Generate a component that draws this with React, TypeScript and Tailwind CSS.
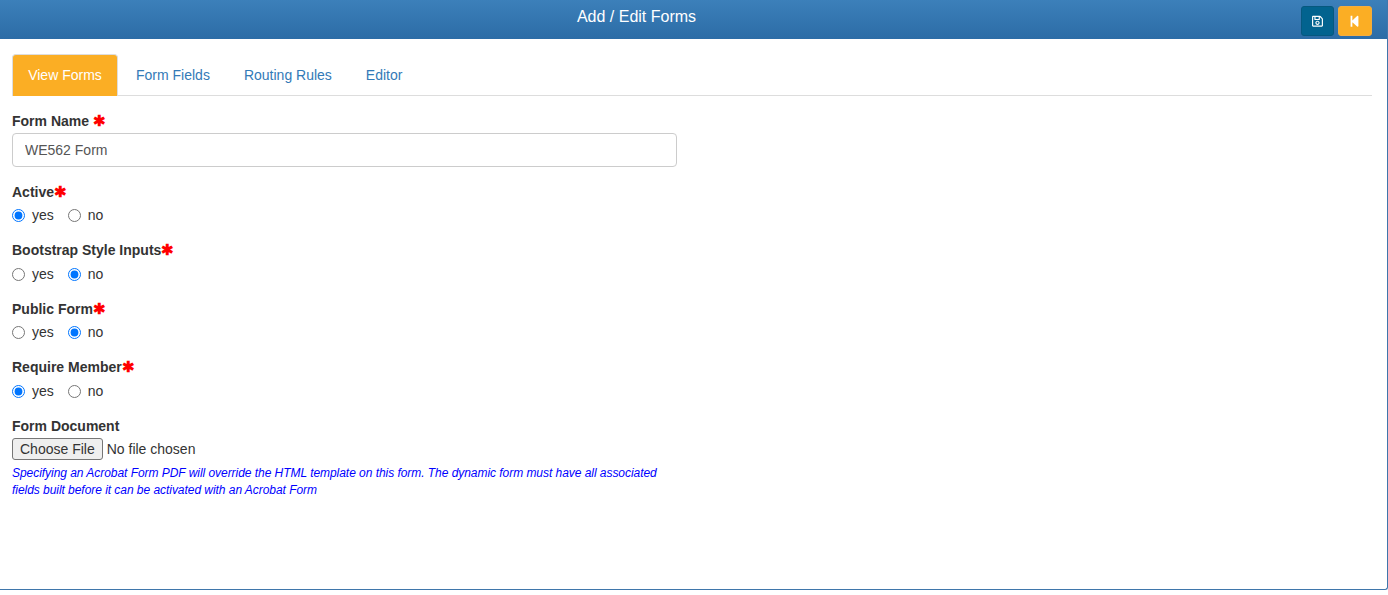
import React from 'react';
import { FaRegSave, FaStepBackward } from 'react-icons/fa';

const required = <span className="text-[#ff0000] text-[15px] leading-none">✱</span>;

function RadioGroup({ name, label, value }: { name: string; label: string; value: 'yes' | 'no' }) {
  return (
    <div className="mb-[14.75px]">
      <div className="h-5 mb-[3.75px] font-bold text-[14px] leading-5 text-[#333]">
        {label}
        {required}
      </div>
      <div className="flex items-center h-5 text-[14px] text-[#333]">
        <label className="flex items-center mr-[14px]">
          <input type="radio" name={name} defaultChecked={value === 'yes'} className="m-0 mr-[7px] w-[13px] h-[13px]" />
          yes
        </label>
        <label className="flex items-center">
          <input type="radio" name={name} defaultChecked={value === 'no'} className="m-0 mr-[7px] w-[13px] h-[13px]" />
          no
        </label>
      </div>
    </div>
  );
}

export default function App() {
  return (
    <div className="w-[1388px] h-[595px] bg-white font-['Liberation_Sans',Arial,sans-serif]">
      <div className="h-[590px] border-r border-b border-[#3f76ab] rounded-br-[3px]">
        <div className="h-[39px] flex bg-gradient-to-b from-[#3c80ba] to-[#2c6ca6]">
          <div className="flex-1 pr-[28px] pt-[6px] text-center text-white text-[16px] leading-[22px]">
            Add / Edit Forms
          </div>
          <div className="flex gap-[4px] pt-[6px] pr-[15px]">
            <button className="w-[33px] h-[30px] flex items-center justify-center rounded-[3px] bg-[#02638f] border border-[#06587f] text-white">
              <FaRegSave className="w-[11px] h-[12.5px]" />
            </button>
            <button className="w-[34px] h-[30px] flex items-center justify-center rounded-[3px] bg-[#fbae24] border border-[#f5ad3f] text-white">
              <FaStepBackward className="w-[11px] h-[12.5px] -translate-x-px" />
            </button>
          </div>
        </div>

        <div className="pl-3 pr-[15px] pt-[15px]">
          <div className="flex h-[42px] border-b border-[#dddddd] text-[14px] text-[#337ab7]">
            <div className="w-[106px] h-[42px] flex items-center justify-center bg-[#fbae24] text-white border border-b-0 border-[#dddddd] rounded-t-[4px]">
              View Forms
            </div>
            <div className="ml-[2px] px-[16px] h-[42px] flex items-center">Form Fields</div>
            <div className="ml-[2px] px-[16px] h-[42px] flex items-center">Routing Rules</div>
            <div className="ml-[2px] px-[16px] h-[42px] flex items-center">Editor</div>
          </div>

          <div className="w-[665px] pt-[15px]">
            <div className="mb-[14.75px]">
              <div className="h-5 mb-[2px] font-bold text-[14px] leading-5 text-[#333]">
                Form Name {required}
              </div>
              <input
                type="text"
                defaultValue="WE562 Form"
                className="block w-full h-[34px] px-3 border border-[#cccccc] rounded-[4px] text-[14px] text-[#555] outline-none"
              />
            </div>

            <RadioGroup name="active" label="Active" value="yes" />
            <RadioGroup name="bootstrap" label="Bootstrap Style Inputs" value="no" />
            <RadioGroup name="public" label="Public Form" value="no" />
            <RadioGroup name="member" label="Require Member" value="yes" />

            <div className="h-5 mb-[2.25px] font-bold text-[14px] leading-5 text-[#333]">Form Document</div>
            <input type="file" className="block text-[14px] text-[#333] h-[22px] font-['Liberation_Sans',Arial,sans-serif] [&::file-selector-button]:mr-[4px] [&::file-selector-button]:px-[7px] [&::file-selector-button]:h-[22px] [&::file-selector-button]:border [&::file-selector-button]:border-[#767676] [&::file-selector-button]:rounded-[3px] [&::file-selector-button]:bg-[#efefef]" />
            <p className="mt-[5px] text-[12px] leading-[17px] italic text-[#0000ff] tracking-[-0.045px]">
              Specifying an Acrobat Form PDF will override the HTML template on this form. The dynamic form must have all associated fields built before it can be activated with an Acrobat Form
            </p>
          </div>
        </div>
      </div>
    </div>
  );
}
